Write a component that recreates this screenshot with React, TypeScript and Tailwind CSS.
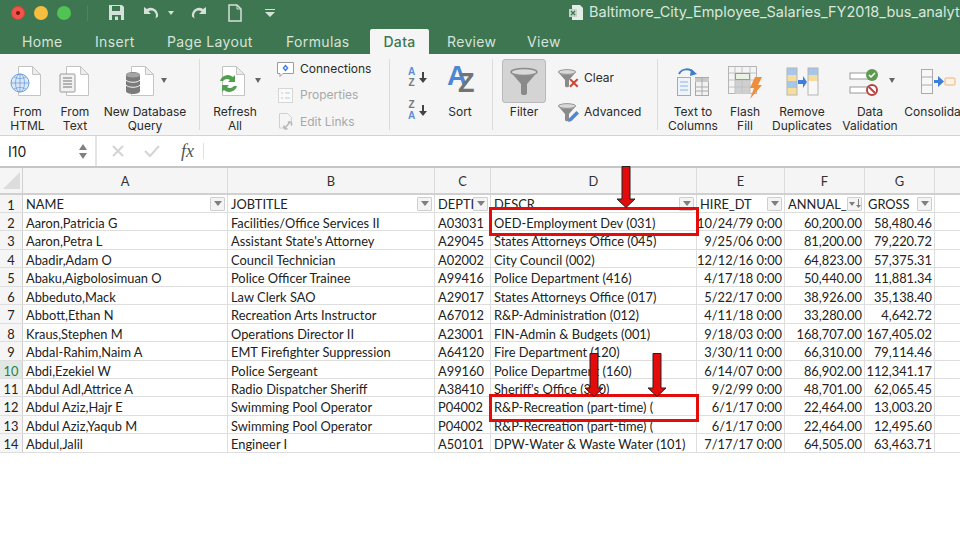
import type { ReactNode } from "react";

const rows = [
  ["Aaron,Patricia G", "Facilities/Office Services II", "A03031", "OED-Employment Dev (031)", "10/24/79 0:00", "60,200.00", "58,480.46"],
  ["Aaron,Petra L", "Assistant State's Attorney", "A29045", "States Attorneys Office (045)", "9/25/06 0:00", "81,200.00", "79,220.72"],
  ["Abadir,Adam O", "Council Technician", "A02002", "City Council (002)", "12/12/16 0:00", "64,823.00", "57,375.31"],
  ["Abaku,Aigbolosimuan O", "Police Officer Trainee", "A99416", "Police Department (416)", "4/17/18 0:00", "50,440.00", "11,881.34"],
  ["Abbeduto,Mack", "Law Clerk SAO", "A29017", "States Attorneys Office (017)", "5/22/17 0:00", "38,926.00", "35,138.40"],
  ["Abbott,Ethan N", "Recreation Arts Instructor", "A67012", "R&P-Administration (012)", "4/11/18 0:00", "33,280.00", "4,642.72"],
  ["Kraus,Stephen M", "Operations Director II", "A23001", "FIN-Admin & Budgets (001)", "9/18/03 0:00", "168,707.00", "167,405.02"],
  ["Abdal-Rahim,Naim A", "EMT Firefighter Suppression", "A64120", "Fire Department (120)", "3/30/11 0:00", "66,310.00", "79,114.46"],
  ["Abdi,Ezekiel W", "Police Sergeant", "A99160", "Police Department (160)", "6/14/07 0:00", "86,902.00", "112,341.17"],
  ["Abdul Adl,Attrice A", "Radio Dispatcher Sheriff", "A38410", "Sheriff's Office (360)", "9/2/99 0:00", "48,701.00", "62,065.45"],
  ["Abdul Aziz,Hajr E", "Swimming Pool Operator", "P04002", "R&P-Recreation (part-time) (", "6/1/17 0:00", "22,464.00", "13,003.20"],
  ["Abdul Aziz,Yaqub M", "Swimming Pool Operator", "P04002", "R&P-Recreation (part-time) (", "6/1/17 0:00", "22,464.00", "12,495.60"],
  ["Abdul,Jalil", "Engineer I", "A50101", "DPW-Water & Waste Water (101)", "7/17/17 0:00", "64,505.00", "63,463.71"],
];

const headers = [
  { label: "NAME", w: "w-[205px]" },
  { label: "JOBTITLE", w: "w-[207px]" },
  { label: "DEPTI", w: "w-[56px]" },
  { label: "DESCR", w: "w-[206px]" },
  { label: "HIRE_DT", w: "w-[88px]" },
  { label: "ANNUAL_", w: "w-[80px]" },
  { label: "GROSS", w: "w-[70px]" },
];

const tabs = [
  { label: "Home", w: "w-[73px]" },
  { label: "Insert", w: "w-[72px]" },
  { label: "Page Layout", w: "w-[119px]" },
  { label: "Formulas", w: "w-[84px]" },
];

function Doc({ children }: { children?: ReactNode }) {
  return (
    <svg width="36" height="36" viewBox="0 0 36 36">
      <path d="M9.5 2.5h14l8 8v21h-22z" fill="#fff" stroke="#c4c4c4" />
      <path d="M23.5 2.5v8h8z" fill="#ececec" stroke="#c4c4c4" />
      {children}
    </svg>
  );
}

function FunnelIcon({ size = 30 }: { size?: number }) {
  return (
    <svg width={size} height={size} viewBox="0 0 30 30">
      <ellipse cx="15" cy="6" rx="13" ry="3.5" fill="#d9d9d9" stroke="#8c8c8c" strokeWidth="1.4" />
      <path d="M2.5 7 12 18v9a3 2 0 0 0 6 0v-9l9.5-11a13 4 0 0 1-25 0z" fill="#8a8a8a" />
    </svg>
  );
}

function RibbonButton({ w, label, icon, caret, iconClass }: { w: string; label: ReactNode; icon: ReactNode; caret?: string; iconClass?: string }) {
  return (
    <div className={`${w} relative flex shrink-0 flex-col items-center`}>
      <div className={`flex h-[46px] items-center justify-center ${iconClass ?? ""}`}>{icon}</div>
      <div className="text-center text-[12px] leading-[14px] whitespace-nowrap text-[#2b2b2b]">{label}</div>
      {caret && <span className={`absolute top-[19px] ${caret} h-0 w-0 border-x-[3.5px] border-t-[5px] border-x-transparent border-t-[#666]`} />}
    </div>
  );
}

function Sep({ ml, mr }: { ml: string; mr: string }) {
  return <div className={`${ml} ${mr} h-[71px] w-px shrink-0 bg-[#dcdcdc]`} />;
}

function FilterButton({ sorted }: { sorted?: boolean }) {
  return (
    <span className="flex h-[14px] w-[15px] shrink-0 items-center justify-center gap-[1px] rounded-[1px] border border-[#cfcfcf] bg-[#f4f4f4]">
      {sorted ? (
        <>
          <span className="h-0 w-0 border-x-[3px] border-t-[4px] border-x-transparent border-t-[#7f7f7f]" />
          <svg width="5" height="9" viewBox="0 0 5 9">
            <path d="M2 0h1v6h2L2.500 9 0 6h2z" fill="#7f7f7f" />
          </svg>
        </>
      ) : (
        <span className="h-0 w-0 border-x-[4px] border-t-[5px] border-x-transparent border-t-[#7f7f7f]" />
      )}
    </span>
  );
}

function DownArrow({ className, h }: { className: string; h: number }) {
  return (
    <svg className={`absolute ${className}`} width="20" height={h} viewBox={`0 0 20 ${h}`}>
      <path d={`M6 0.5h8V${h - 9}h5L10 ${h - 0.5}L1 ${h - 9}h5z`} fill="#e40b0b" stroke="#222" strokeWidth="1" />
    </svg>
  );
}

export default function App() {
  return (
    <div className="relative h-[540px] w-[960px] overflow-hidden bg-white font-['Inter',sans-serif]">
      {/* title bar */}
      <div className="h-[54px] overflow-hidden bg-[#3d7650]">
        <div className="flex h-[25px] items-center pl-[11px] [&>*]:shrink-0">
          <span className="flex h-[14px] w-[14px] items-center justify-center rounded-full border border-[#d8433b] bg-[#f2544c]">
            <span className="h-[4px] w-[4px] rounded-full bg-[#7d1410]" />
          </span>
          <span className="ml-[9px] h-[14px] w-[14px] rounded-full bg-[#f6bd3f]" />
          <span className="ml-[9px] h-[14px] w-[14px] rounded-full bg-[#50c354]" />
          <span className="ml-[16px] h-[16px] w-px bg-[#4b8560]" />
          <svg className="ml-[20px]" width="17" height="17" viewBox="0 0 17 17">
            <path d="M1 1h13l2 2v13H1z" fill="#d5e0d8" />
            <path d="M4 2h8v5H4z" fill="#3d7650" />
            <path d="M4 11h9v5H4z" fill="#3d7650" />
            <path d="M7 12.5h3V16H7z" fill="#d5e0d8" />
          </svg>
          <svg className="ml-[17px]" width="18" height="14" viewBox="0 0 18 14">
            <path d="M2 1v7h7L6.5 5.5C9 3.500 13 4.500 14 9l-.5 3.500 2.500-2C17 5 11-1 4.800 3z" fill="#d5e0d8" />
          </svg>
          <span className="ml-[8px] h-0 w-0 border-x-[3px] border-t-[4px] border-x-transparent border-t-[#d5e0d8]" />
          <svg className="ml-[16px]" width="18" height="14" viewBox="0 0 18 14">
            <path d="M16 1v7H9l2.500-2.500C9 3.500 5 4.500 4 9l.5 3.500-2.500-2C1 5 7-1 13.200 3z" fill="#d5e0d8" />
          </svg>
          <svg className="ml-[20px]" width="14" height="18" viewBox="0 0 14 18">
            <path d="M1 1h8l4 4v12H1z" fill="none" stroke="#d5e0d8" strokeWidth="1.500" />
            <path d="M9 1v4h4" fill="none" stroke="#d5e0d8" />
          </svg>
          <svg className="ml-[23px]" width="10" height="10" viewBox="0 0 10 10">
            <path d="M0 1h10v1H0zM0 4h10L5 9z" fill="#d5e0d8" />
          </svg>
          <svg className="ml-[293px]" width="16" height="17" viewBox="0 0 16 17">
            <path d="M4 1h8l3 3v12H4z" fill="#e4ece6" />
            <path d="M1 5h8v8H1z" fill="#c3d3c8" />
            <path d="M3 7l4 4M7 7l-4 4" stroke="#3d7650" strokeWidth="1.200" />
          </svg>
          <span className="ml-[5px] text-[14.5px] leading-none whitespace-nowrap text-[#dbe6de]">
            Baltimore_City_Employee_Salaries_FY2018_bus_analytics
          </span>
        </div>
        <div className="mt-[4px] flex h-[25px] items-end pl-[22px] text-[14px] tracking-[0.35px]">
          {tabs.map((t) => (
            <span key={t.label} className={`${t.w} h-[25px] leading-[25px] text-[#d6e3da]`}>
              {t.label}
            </span>
          ))}
          <span className="h-[25px] w-[59px] rounded-t-[2px] bg-[#f5f5f5] text-center leading-[25px] font-medium text-[#3d7650]">Data</span>
          <span className="ml-[18px] h-[25px] w-[80px] leading-[25px] text-[#d6e3da]">Review</span>
          <span className="h-[25px] leading-[25px] text-[#d6e3da]">View</span>
        </div>
      </div>

      {/* ribbon */}
      <div className="flex h-[82px] items-start overflow-hidden border-b border-[#d4d4d4] bg-[#f5f5f5] pt-[5px] pl-[4px]">
        <RibbonButton
          w="w-[47px]"
          label={<>From<br />HTML</>}
          iconClass="mr-[2px]"
          icon={
            <Doc>
              <circle cx="11" cy="19" r="9" fill="#dbe8f8" stroke="#6f9fdc" />
              <path d="M2 19h18M11 10v18M5 13c4 2 8 2 12 0M5 25c4-2 8-2 12 0" stroke="#6f9fdc" strokeWidth=".8" fill="none" />
              <ellipse cx="11" cy="19" rx="4.500" ry="9" fill="none" stroke="#6f9fdc" strokeWidth=".8" />
            </Doc>
          }
        />
        <RibbonButton
          w="w-[48px]"
          label={<>From<br />Text</>}
          icon={
            <Doc>
              <rect x="3" y="10" width="15" height="18" rx="1" fill="#f1f1f1" stroke="#9a9a9a" />
              <path d="M6 14h9M6 17h9M6 20h9M6 23h9" stroke="#777" />
            </Doc>
          }
        />
        <RibbonButton
          w="w-[92px]"
          label={<>New Database<br />Query</>}
          caret="left-[62px]"
          iconClass="mr-[10px]"
          icon={
            <Doc>
              <path d="M4 11c0-4 14-4 14 0v16c0 4-14 4-14 0z" fill="#7b7b7b" />
              <path d="M4 16c2 3 12 3 14 0M4 21c2 3 12 3 14 0" stroke="#f5f5f5" fill="none" />
              <ellipse cx="11" cy="11" rx="7" ry="2.500" fill="#a5a5a5" />
            </Doc>
          }
        />
        <Sep ml="ml-[8px]" mr="mr-[5px]" />
        <RibbonButton
          w="w-[60px]"
          label={<>Refresh<br />All</>}
          caret="left-[50px]"
          iconClass="mr-[8px]"
          icon={
            <Doc>
              <path d="M7 17a8 8 0 0 1 13-4l2-2v7h-7l2-2a5 5 0 0 0-7 1z" fill="#4fa14f" />
              <path d="M24 22a8 8 0 0 1-13 4l-2 2v-7h7l-2 2a5 5 0 0 0 7-1z" fill="#4fa14f" />
            </Doc>
          }
        />
        <div className="ml-[11px] flex w-[99px] shrink-0 flex-col gap-[8px] pt-[1px] text-[12px] leading-[18px] whitespace-nowrap">
          <div className="flex items-center gap-[5px] text-[#2b2b2b]">
            <svg width="19" height="17" viewBox="0 0 19 17">
              <path d="M1.500 1.500h16v11H7l-3 3v-3H1.500z" fill="#fff" stroke="#9c9c9c" />
              <path d="M9.500 3.500 12.500 7l-3 3.500L6.500 7z" fill="#3f7fdc" />
              <circle cx="9.500" cy="7" r="1" fill="#fff" />
            </svg>
            Connections
          </div>
          <div className="flex items-center gap-[5px] text-[#a8a8a8]">
            <svg width="19" height="17" viewBox="0 0 19 17">
              <rect x="2.500" y="1.500" width="14" height="14" fill="#fafafa" stroke="#d6d6d6" />
              <path d="M5 6h2M9 6h5M5 11h2M9 11h5" stroke="#b5cbe3" />
            </svg>
            Properties
          </div>
          <div className="flex items-center gap-[5px] text-[#a8a8a8]">
            <svg width="19" height="19" viewBox="0 0 19 19">
              <path d="M3.500 1.500h8l4 4v6M3.500 1.500V16h5" fill="none" stroke="#d0d0d0" />
              <path d="M9 16l5-6M8.500 13.500a2 2 0 0 0 3 3M12 10.500a2 2 0 0 1 3 3" stroke="#b8b8b8" strokeWidth="1.500" fill="none" />
            </svg>
            Edit Links
          </div>
        </div>
        <Sep ml="ml-[14px]" mr="mr-[13px]" />
        <div className="flex w-[26px] shrink-0 flex-col gap-[11px] pt-[7px] pl-[5px] font-['Liberation_Sans',sans-serif] text-[10px] leading-[11px] font-bold">
          <div className="flex items-center gap-[4px]">
            <span className="text-center"><span className="block text-[#5b8dd6]">A</span><span className="block text-[#7a7a7a]">Z</span></span>
            <svg width="8" height="11" viewBox="0 0 8 11"><path d="M3 0h2v6h3l-4 5-4-5h3z" fill="#444" /></svg>
          </div>
          <div className="flex items-center gap-[4px]">
            <span className="text-center"><span className="block text-[#7a7a7a]">Z</span><span className="block text-[#5b8dd6]">A</span></span>
            <svg width="8" height="11" viewBox="0 0 8 11"><path d="M3 0h2v6h3l-4 5-4-5h3z" fill="#444" /></svg>
          </div>
        </div>
        <div className="ml-[13px] flex w-[36px] shrink-0 flex-col items-center">
          <div className="relative h-[46px] w-[36px] font-['Liberation_Sans',sans-serif] font-bold">
            <span className="absolute top-[3px] left-[5px] text-[28px] leading-[28px] text-[#4f86d4]">A</span>
            <span className="absolute top-[11px] left-[16px] text-[27px] leading-[27px] text-[#737373]">Z</span>
          </div>
          <span className="text-[12px] leading-[14px] text-[#2b2b2b]">Sort</span>
        </div>
        <Sep ml="ml-[14px]" mr="mr-[9px]" />
        <div className="flex shrink-0 flex-col items-center">
          <div className="flex h-[44px] w-[44px] items-center justify-center rounded-[3px] border border-[#b9b9b9] bg-[#d4d4d4]">
            <FunnelIcon />
          </div>
          <span className="mt-[2px] text-[12px] leading-[14px] text-[#2b2b2b]">Filter</span>
        </div>
        <div className="ml-[11px] flex w-[90px] shrink-0 flex-col gap-[12px] pt-[8px] text-[12px] text-[#2b2b2b]">
          <div className="relative flex h-[22px] items-center gap-[7px]">
            <FunnelIcon size={20} />
            <span className="absolute top-[9px] left-[11px] text-[14px] leading-[14px] font-bold text-[#c9423c]">✕</span>
            Clear
          </div>
          <div className="relative flex h-[22px] items-center gap-[7px]">
            <FunnelIcon size={20} />
            <svg className="absolute top-[9px] left-[10px]" width="13" height="13" viewBox="0 0 13 13"><path d="M9.500 1 12 3.500 4.500 11 1 12l1-3.500z" fill="#4f86d4" /></svg>
            Advanced
          </div>
        </div>
        <Sep ml="ml-[10px]" mr="mr-[5px]" />
        <RibbonButton
          w="w-[60px]"
          label={<>Text to<br />Columns</>}
          icon={
            <svg width="34" height="32" viewBox="0 0 34 32">
              <path d="M3 8c3-6 11-6 15-1" fill="none" stroke="#3f7fc4" strokeWidth="2" />
              <path d="M15 3l6 5-7 2z" fill="#3f7fc4" />
              <rect x="1.500" y="11.500" width="13" height="18" fill="#eef4fb" stroke="#aaa" />
              <path d="M4 16h8M4 20h8M4 24h8" stroke="#8fb3dc" />
              <rect x="19.500" y="11.500" width="13" height="18" fill="#f2f2f2" stroke="#aaa" />
              <path d="M19 16h14v-4H19z" fill="#c9c9c9" />
              <path d="M26 12v18M20 21h13M20 25h13" stroke="#aaa" />
            </svg>
          }
        />
        <RibbonButton
          w="w-[44px]"
          label={<>Flash<br />Fill</>}
          icon={
            <svg width="36" height="34" viewBox="0 0 36 34">
              <rect x="1.500" y="1.500" width="28" height="27" fill="#f4f4f4" stroke="#b5b5b5" />
              <path d="M8 8h15v21H8z" fill="#cfcfcf" />
              <path d="M8 2v27M15 2v27M23 2v27M2 8h28M2 15h28M2 22h28" stroke="#c2c2c2" />
              <rect x="8.500" y="8.500" width="14" height="6" fill="#e9f3e4" stroke="#7fae68" />
              <path d="M28 12h7l-4 8h4L23 34l4-11h-4z" fill="#ee8e3a" />
            </svg>
          }
        />
        <RibbonButton
          w="w-[70px]"
          label={<>Remove<br />Duplicates</>}
          icon={
            <svg width="33" height="30" viewBox="0 0 33 30">
              <path d="M1 1h10v7H1z" fill="#a6c6ea" /><path d="M1 8h10v6H1z" fill="#f5dd9e" /><path d="M1 14h10v7H1z" fill="#a6c6ea" /><path d="M1 21h10v7H1z" fill="#f5dd9e" />
              <rect x="1" y="1" width="10" height="27" fill="none" stroke="#b5b5b5" />
              <path d="M22 1h10v7H22z" fill="#a6c6ea" /><path d="M22 8h10v6H22z" fill="#f5dd9e" /><path d="M22 14h10v14H22z" fill="#f7f7f7" />
              <rect x="22" y="1" width="10" height="27" fill="none" stroke="#b5b5b5" />
              <path d="M12 13h5V9l4 6-4 6v-4h-5z" fill="#3f7fdc" />
            </svg>
          }
        />
        <RibbonButton
          w="w-[66px]"
          label={<>Data<br />Validation</>}
          caret="left-[52px]"
          iconClass="mr-[12px]"
          icon={
            <svg width="30" height="30" viewBox="0 0 30 30">
              <rect x="1" y="6" width="22" height="6" fill="#fff" stroke="#9a9a9a" />
              <rect x="1" y="20" width="22" height="6" fill="#fff" stroke="#9a9a9a" />
              <circle cx="23" cy="8" r="6" fill="#5f9a52" />
              <path d="M20 8l2 2 4-4" stroke="#fff" strokeWidth="1.500" fill="none" />
              <circle cx="23" cy="23" r="5" fill="#fff" stroke="#b8433f" strokeWidth="2" />
              <path d="M20 20l6 6" stroke="#b8433f" strokeWidth="2" />
            </svg>
          }
        />
        <RibbonButton
          w="w-[70px]"
          label="Consolidate"
          icon={
            <svg width="36" height="28" viewBox="0 0 36 28">
              <rect x="1.500" y="1.500" width="11" height="24" fill="#f7f7f7" stroke="#aaa" />
              <path d="M2 9h10M2 17h10" stroke="#aaa" />
              <path d="M14 12h4V8l6 5.500-6 5.500v-4h-4z" fill="#3f7fdc" />
              <rect x="25" y="10" width="10" height="7" rx="1" fill="#fdf2e3" stroke="#ecb27c" />
            </svg>
          }
        />
      </div>

      {/* formula bar */}
      <div className="flex h-[30px] items-stretch bg-white">
        <div className="flex w-[95px] shrink-0 items-center justify-between px-[8px] text-[14px] text-[#222]">
          I10
          <span className="flex flex-col gap-[3px]">
            <span className="h-0 w-0 border-x-[4px] border-b-[6px] border-x-transparent border-b-[#808080]" />
            <span className="h-0 w-0 border-x-[4px] border-t-[6px] border-x-transparent border-t-[#808080]" />
          </span>
        </div>
        <div className="w-[2px] bg-[#e4e4e4]" />
        <div className="flex w-[110px] shrink-0 items-center pl-[14px]">
          <svg width="14" height="14" viewBox="0 0 14 14"><path d="M2 2l10 10M12 2 2 12" stroke="#d4d4d4" strokeWidth="2" /></svg>
          <svg className="ml-[19px]" width="16" height="14" viewBox="0 0 16 14"><path d="M1 7l5 5 9-10" stroke="#d4d4d4" strokeWidth="2" fill="none" /></svg>
          <span className="ml-[21px] font-['Liberation_Serif',serif] text-[18px] leading-none text-[#555] italic">fx</span>
          <span className="ml-[9px] h-[16px] w-px bg-[#e0e0e0]" />
        </div>
      </div>

      {/* sheet */}
      <div className="border-t-[2px] border-[#c6c6c6] font-['Lato',sans-serif] text-[12.85px] text-[#222]">
        <div className="flex h-[27px] border-b-[2px] border-[#d0d0d0] bg-[#f5f5f5] text-[#333]">
          <div className="flex w-[23px] shrink-0 items-end border-r border-[#d0d0d0] pb-[4px] pl-[3px]">
            <svg width="17" height="17" viewBox="0 0 17 17"><path d="M17 0v17H0z" fill="#dcdcdc" /></svg>
          </div>
          {["A", "B", "C", "D", "E", "F", "G"].map((c, i) => (
            <div key={c} className={`${headers[i].w} flex shrink-0 items-center justify-center border-r border-[#dcdcdc] pt-[3px]`}>
              {c}
            </div>
          ))}
          <div className="flex-1" />
        </div>

        <div className="flex h-[18px] border-b border-[#dedede]">
          <div className="w-[23px] shrink-0 border-r border-[#d0d0d0] bg-[#f5f5f5] text-center leading-[20px]">1</div>
          {headers.map((h) => (
            <div key={h.label} className={`${h.w} flex shrink-0 items-center justify-between overflow-hidden border-r border-[#dedede] pr-[2px] pl-[3px]`}>
              <span className="overflow-hidden pt-[2px] whitespace-nowrap">{h.label}</span>
              <FilterButton sorted={h.label === "ANNUAL_"} />
            </div>
          ))}
          <div className="flex-1" />
        </div>

        {rows.map((row, i) => (
          <div key={row[0]} className="flex h-[18.45px] border-b border-[#dedede]">
            <div className={`w-[23px] shrink-0 border-r border-[#d0d0d0] text-center leading-[20px] ${i === 8 ? "bg-[#dfe8e2] text-[#2f7a4c]" : "bg-[#f5f5f5]"}`}>
              {i + 2}
            </div>
            {row.map((cell, j) => (
              <div
                key={j}
                className={`${headers[j].w} shrink-0 overflow-hidden border-r border-[#dedede] leading-[20px] whitespace-nowrap ${j >= 4 ? "pr-[2px] text-right" : "pl-[3px]"}`}
              >
                {cell}
              </div>
            ))}
            <div className="flex-1" />
          </div>
        ))}
      </div>

      {/* annotations drawn over the sheet */}
      <div className="absolute top-[207px] left-[489px] h-[29px] w-[210px] border-[3px] border-[#e40b0b]" />
      <div className="absolute top-[394px] left-[489px] h-[28px] w-[210px] border-[3px] border-[#e40b0b]" />
      <DownArrow className="top-[166px] left-[616px]" h={42} />
      <DownArrow className="top-[353px] left-[584px]" h={44} />
      <DownArrow className="top-[353px] left-[647px]" h={44} />
    </div>
  );
}
